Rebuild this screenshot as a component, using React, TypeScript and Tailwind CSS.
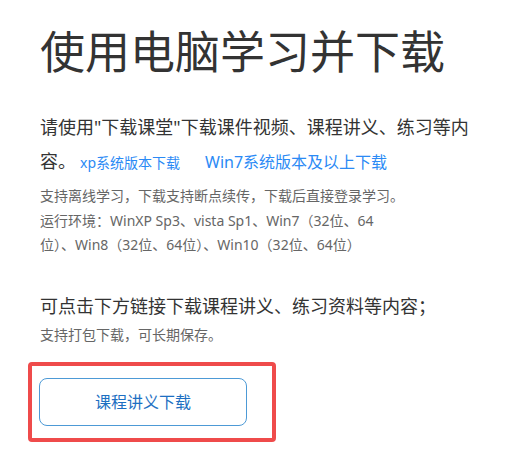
const font = { fontFamily: '"Noto Sans", "Noto Sans CJK SC", sans-serif' };

export default function App() {
  return (
    <div className="min-h-screen bg-white pl-10 pt-[27px] text-[#333]" style={font}>
      <h1 className="text-[45px] leading-[50px] font-normal text-[#333]">使用电脑学习并下载</h1>

      <div className="mt-[33px] w-[440px] text-[18px] leading-[34px]">
        <p>请使用"下载课堂"下载课件视频、课程讲义、练习等内</p>
        <p className="flex items-baseline">
          <span>容。</span>
          <a href="#" className="ml-1 text-[14px] text-[#2b8af5]">xp系统版本下载</a>
          <a href="#" className="ml-[25px] text-[16px] text-[#2b8af5]">Win7系统版本及以上下载</a>
        </p>
      </div>

      <div className="mt-1 w-[372px] text-[14px] leading-[24.5px] text-[#666]">
        <p>支持离线学习，下载支持断点续传，下载后直接登录学习。</p>
        <p>运行环境：WinXP Sp3、vista Sp1、Win7（32位、64</p>
        <p>位）、Win8（32位、64位）、Win10（32位、64位）</p>
      </div>

      <p className="mt-[33px] text-[18px] leading-[30px]">可点击下方链接下载课程讲义、练习资料等内容；</p>
      <p className="mt-[2px] text-[14px] leading-[24.5px] text-[#666]">支持打包下载，可长期保存。</p>

      <div className="-ml-3 mt-[15px] inline-block rounded-sm border-4 border-[#ef4b4b] pb-3 pl-[7px] pr-[25px] pt-3">
        <button className="flex h-[48px] w-[208px] items-center justify-center rounded-lg border border-[#4d9ad6] bg-white text-[16px] text-[#1d6fc2]">
          课程讲义下载
        </button>
      </div>
    </div>
  );
}
